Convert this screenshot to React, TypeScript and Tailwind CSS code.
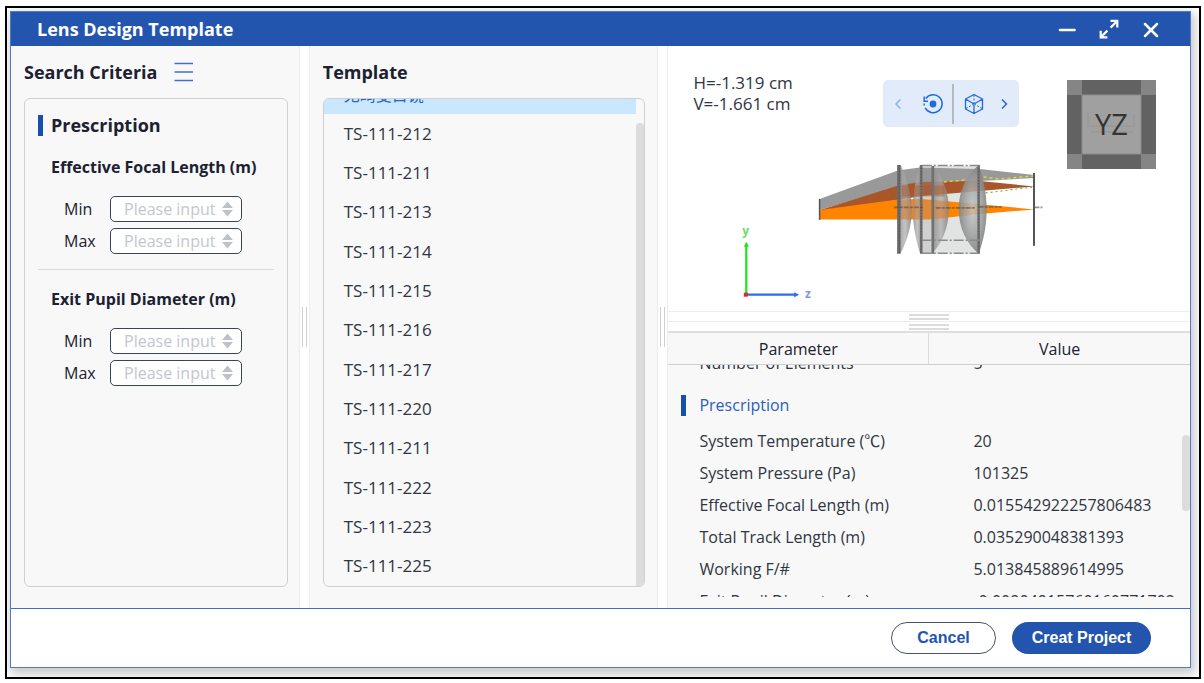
import { useLayoutEffect, useRef } from "react";

const templates = [
  "TS-111-212",
  "TS-111-211",
  "TS-111-213",
  "TS-111-214",
  "TS-111-215",
  "TS-111-216",
  "TS-111-217",
  "TS-111-220",
  "TS-111-211",
  "TS-111-222",
  "TS-111-223",
  "TS-111-225",
];

const prescription = [
  ["System Temperature (℃)", "20"],
  ["System Pressure (Pa)", "101325"],
  ["Effective Focal Length (m)", "0.015542922257806483"],
  ["Total Track Length (m)", "0.035290048381393"],
  ["Working F/#", "5.013845889614995"],
  ["Exit Pupil Diameter (m)", "-0.00904915760160771702"],
];

function TitleBar() {
  return (
    <header className="flex h-[34px] shrink-0 items-center justify-between bg-[#2355ae] pr-[29px] pl-[26px] text-white">
      <h1 className="text-lg leading-6 font-bold">Lens Design Template</h1>
      <div className="flex items-center gap-[22px]">
        <button type="button" aria-label="Minimize" className="size-5">
          <svg viewBox="0 0 20 20" className="size-5" fill="none" stroke="currentColor" strokeWidth="2.6" strokeLinecap="round">
            <path d="M3 11H17.500" />
          </svg>
        </button>
        <button type="button" aria-label="Maximize" className="size-5">
          <svg viewBox="0 0 20 20" className="size-5" fill="none" stroke="currentColor" strokeWidth="2.2">
            <path d="M11.500 1.900H18.300V8.500M18 2.200L11.600 8.600M8.400 18.300H1.700V11.700M2 18L8.400 11.600" />
          </svg>
        </button>
        <button type="button" aria-label="Close" className="size-5">
          <svg viewBox="0 0 20 20" className="size-5" fill="none" stroke="currentColor" strokeWidth="2.5" strokeLinecap="round">
            <path d="M4 5L16 17M16 5L4 17" />
          </svg>
        </button>
      </div>
    </header>
  );
}

function NumberField({ id, label }: { id: string; label: string }) {
  return (
    <div className="flex items-center">
      <label htmlFor={id} className="w-[46px] shrink-0 text-base leading-6">
        {label}
      </label>
      <div className="flex h-[26px] w-[132px] items-center rounded-[5px] border border-[#3a4456] bg-white pr-2 pl-[13px]">
        <input
          id={id}
          type="text"
          inputMode="decimal"
          placeholder="Please input"
          className="w-full min-w-0 flex-1 bg-transparent text-base leading-6 outline-none placeholder:text-[#c2c6d0]"
        />
        <svg viewBox="0 0 11 16" className="h-4 w-[11px] shrink-0 text-[#bcc1cc]" fill="currentColor">
          <path d="M5.500 0.500L11 7H0ZM0 9H11L5.500 15.500Z" />
        </svg>
      </div>
    </div>
  );
}

function RangeGroup({ id, title }: { id: string; title: string }) {
  return (
    <fieldset className="pl-[13px]">
      <legend className="text-base leading-6 font-bold">{title}</legend>
      <div className="flex flex-col gap-[6px] pt-[17px] pl-[13px]">
        <NumberField id={`${id}-min`} label="Min" />
        <NumberField id={`${id}-max`} label="Max" />
      </div>
    </fieldset>
  );
}

function SearchPanel() {
  return (
    <section className="flex min-w-0 flex-col border-r border-[#ececec] bg-[#f8f8f8] pt-[14px] pr-[11px] pb-[21px] pl-[13px]">
      <div className="flex h-[24px] items-center gap-4">
        <h2 className="text-lg leading-6 font-bold">Search Criteria</h2>
        <button type="button" aria-label="Criteria menu">
          <svg viewBox="0 0 20 20" className="size-5" fill="none" stroke="#3f6fc9" strokeWidth="1.6">
            <path d="M1.500 1.500H20M1.500 10H20M1.500 18.500H20" />
          </svg>
        </button>
      </div>
      <div className="mt-[14px] flex-1 rounded-md border border-[#d0d0d0] px-[13px] pt-[14px]">
        <div className="flex items-center gap-2">
          <span className="h-[21px] w-[5px] bg-[#1450ac]" />
          <h3 className="text-lg leading-6 font-bold">Prescription</h3>
        </div>
        <div className="flex flex-col gap-[15px] pt-[18px]">
          <RangeGroup id="focal" title="Effective Focal Length (m)" />
          <hr className="mb-[2px] border-[#d9d9d9]" />
          <RangeGroup id="pupil" title="Exit Pupil Diameter (m)" />
        </div>
      </div>
    </section>
  );
}

function TemplatePanel() {
  return (
    <section className="flex min-w-0 flex-col border-x border-[#ececec] bg-[#f8f8f8] pt-[14px] pr-3 pb-[21px] pl-[13px]">
      <h2 className="text-lg leading-6 font-bold">Template</h2>
      <div className="mt-[14px] flex min-h-0 flex-1 overflow-hidden rounded-md border border-[#cfcfcf]">
        <ul className="flex min-w-0 flex-1 flex-col text-[17px] leading-6 text-[#2f3542]">
          <li className="-mt-[24px] flex h-[39px] shrink-0 bg-[#c9e7ff] text-base text-[#2b62c0]">
            <button type="button" className="w-full px-5 text-left">无畸变目镜</button>
          </li>
          {templates.map((name, i) => (
            <li key={i} className="flex min-h-0 flex-1">
              <button type="button" className="w-full px-5 text-left">{name}</button>
            </li>
          ))}
        </ul>
        <div className="w-2 shrink-0 pt-6">
          <div className="h-full rounded-t-md bg-[#dcdcdc]" />
        </div>
      </div>
    </section>
  );
}

function Splitter() {
  return (
    <div className="flex items-center justify-center bg-white" role="separator" aria-orientation="vertical">
      <div className="flex h-10 w-[5px] justify-between border-x border-[#cfcfcf]" />
    </div>
  );
}

function LensScene() {
  return (
    <svg viewBox="667.500 46 523 265" className="absolute inset-0 size-full" aria-label="Lens layout">
      <defs>
        <linearGradient id="glass" x1="0" x2="1" y1="0" y2="0">
          <stop offset="0" stopColor="#8a8a8a" stopOpacity=".85" />
          <stop offset=".5" stopColor="#aaa" stopOpacity=".7" />
          <stop offset="1" stopColor="#7c7c7c" stopOpacity=".85" />
        </linearGradient>
        <radialGradient id="bulge">
          <stop offset="0" stopColor="#c6c6c6" stopOpacity=".8" />
          <stop offset="1" stopColor="#838585" stopOpacity=".9" />
        </radialGradient>
      </defs>

      <rect x="922" y="166" width="57" height="88" fill="#e2e4e3" />
      <path d="M819.500 199L898 170.500L920 167.500L980 169L1035 175V178L980 181L900 186L819.500 210Z" fill="#999" />
      <path d="M820 210L900 185L922 182L980 181L1035 186.500L980 191L922 196L898 200L820 211Z" fill="#a9562a" />
      <path d="M819.500 210L898 199.500L922 199L950 201.500L1035 209.500L980 214L930 219.500H819.500Z" fill="#ff8400" />
      <path d="M819.500 199V220" stroke="#555" strokeWidth="1.500" />

      <path d="M899 165H901C907 180 912 195 912 209C912 226 907 241 901 253H898Z" fill="url(#glass)" />
      <path d="M922 165H920C916 178 913 193 913 209C913 225 916 240 920 253H922Z" fill="url(#glass)" />
      <path d="M933 166C943 178 949 192 949 209C949 227 943 242 933 253Z" fill="url(#glass)" />
      <path d="M979 165C984 179 987 194 987 209C987 226 984 240 979 254C967 244 959 228 959 209C959 191 967 175 979 165Z" fill="url(#bulge)" />
      <path d="M922 169L933 167V253H922Z" fill="#999" opacity=".25" />
      <path d="M902 210H948" stroke="#e08a4a" strokeWidth="18" opacity=".4" />
      <path d="M902 191H945" stroke="#a9562a" strokeWidth="11" opacity=".4" />

      <path d="M899 165V254" stroke="#6a6a6a" strokeWidth="3.500" />
      <path d="M921.500 165V254M933 166V254M979 165V254" stroke="#707070" strokeWidth="2.600" />
      <path d="M899.500 165V254M921.500 165V254M979 165V254" stroke="#444" strokeWidth="1" strokeDasharray="1 2" opacity=".7" />
      <path d="M922 165.500H980M922 253.500H980M922 240.500H980" stroke="#8a8a8a" strokeWidth="1.500" strokeDasharray="10 2 2 2" />
      <path d="M894 207.500H924M936 208H975M979 207H1002M1035 207.500H1043" stroke="#4f4f4f" strokeWidth="1.800" strokeDasharray="5 1 3 1" opacity=".6" />
      <path d="M944 182L965 180M984 177L1000 179L1034 176" stroke="#e4d93b" strokeWidth="1.300" strokeDasharray="3 3" fill="none" />
      <path d="M986 193L1034 187" stroke="#80a84c" strokeWidth="1.200" strokeDasharray="2 3" />
      <path d="M1034.500 173V246" stroke="#555" strokeWidth="2" />

      <path d="M746 295V244" stroke="#1ae51a" strokeWidth="2.200" />
      <path d="M743.500 247L746 242L748.500 247Z" fill="#1ae51a" />
      <path d="M746 295H796" stroke="#2a6bff" strokeWidth="2.200" />
      <path d="M794 292.500L799 295L794 297.500Z" fill="#2a6bff" />
      <rect x="743.500" y="293" width="4" height="4" fill="#dc2929" />
      <text x="742" y="235" fontSize="12" fontWeight="700" fill="#6bdc6b" fontFamily="Open Sans, sans-serif">y</text>
      <text x="805" y="298" fontSize="12" fontWeight="700" fill="#8398d8" fontFamily="Open Sans, sans-serif">z</text>
    </svg>
  );
}

function ViewCube() {
  return (
    <svg viewBox="0 0 89 89" className="size-[89px]" aria-label="View cube">
      <rect width="89" height="89" fill="#858585" />
      <path d="M15 0H74V15H15ZM15 74H74V89H15ZM0 15H15V74H0ZM74 15H89V74H74Z" fill="#626262" />
      <rect x="15" y="15" width="59" height="59" fill="#a0a0a0" stroke="#8b8b8b" />
      <path d="M21 32V46H67V34M23 52H66" fill="none" stroke="#989898" strokeWidth="1.500" />
      <text x="44.500" y="55" textAnchor="middle" fontSize="29" fill="#343434" fontFamily="Open Sans, sans-serif">YZ</text>
    </svg>
  );
}

function ViewToolbar() {
  return (
    <div className="flex h-[47px] w-[136px] shrink-0 items-center rounded-[5px] bg-[#e2ebfa] text-[#1f6bdc]">
      <button type="button" aria-label="Previous view" className="flex w-[30px] justify-center text-[#84b5f2]">
        <svg viewBox="0 0 10 14" className="h-[14px] w-[10px]" fill="none" stroke="currentColor" strokeWidth="1.500">
          <path d="M7.500 2.500L3 7L7.500 11.500" />
        </svg>
      </button>
      <button type="button" aria-label="Reset rotation" className="flex w-[39px] justify-center">
        <svg viewBox="0 0 22 22" className="size-[22px]" fill="none" stroke="currentColor" strokeWidth="1.500">
          <path d="M3.800 5.500A9 9 0 1 1 3.200 14.800M2.200 3.500V8.200H6M2.200 10.500V12.500" />
          <circle cx="11" cy="11" r="3.400" fill="currentColor" stroke="none" />
        </svg>
      </button>
      <span className="h-10 w-[2px] bg-[#b4b9bd]" />
      <button type="button" aria-label="Cube view" className="flex w-[39px] justify-center">
        <svg viewBox="0 0 22 22" className="size-[22px]" fill="none" stroke="currentColor" strokeWidth="1.300" strokeLinejoin="round">
          <path d="M11 1.500L19.500 6V16L11 20.500L2.500 16V6ZM2.500 6L11 11L19.500 6M11 11V20.500" />
          <path d="M11 2V10M3 15.500L10 11.500M19 15.500L12 11.500" strokeWidth="1" strokeDasharray="2 1.500" />
        </svg>
      </button>
      <button type="button" aria-label="Next view" className="flex w-[22px] justify-center text-[#2e67c4]">
        <svg viewBox="0 0 10 14" className="h-[14px] w-[10px]" fill="none" stroke="currentColor" strokeWidth="1.500">
          <path d="M3 2.500L7.500 7L3 11.500" />
        </svg>
      </button>
    </div>
  );
}

function ParameterTable() {
  const body = useRef<HTMLTableSectionElement>(null);
  useLayoutEffect(() => {
    if (body.current) body.current.scrollTop = 19;
  }, []);

  return (
    <div className="relative flex min-h-0 flex-1 flex-col border-t-2 border-[#dfdfdf] bg-[#f8f8f8] pb-[11px]">
      <table className="flex min-h-0 flex-1 flex-col text-base leading-6">
        <thead className="block shrink-0 border-b border-[#cfcfcf]">
          <tr className="flex h-[31px]">
            <th scope="col" className="flex w-1/2 items-center justify-center border-r border-[#dcdcdc] font-normal">Parameter</th>
            <th scope="col" className="flex w-1/2 items-center justify-center font-normal">Value</th>
          </tr>
        </thead>
        <tbody ref={body} className="block min-h-0 flex-1 overflow-y-auto text-[#2f3542] [scrollbar-width:none]">
          <tr className="flex h-[33px] items-center">
            <td className="w-[305px] shrink-0 pl-[31px]">Number of Elements</td>
            <td>5</td>
          </tr>
          <tr className="flex h-[46px] items-center">
            <th scope="rowgroup" colSpan={2} className="flex items-center gap-[13px] pt-[6px] pl-[13px] font-normal text-[#2b5fb8]">
              <span className="h-[21px] w-[5px] bg-[#1450ac]" />
              Prescription
            </th>
          </tr>
          {prescription.map(([name, value]) => (
            <tr key={name} className="flex h-8 items-center">
              <td className="w-[305px] shrink-0 pl-[31px]">{name}</td>
              <td>{value}</td>
            </tr>
          ))}
        </tbody>
      </table>
      <div className="absolute top-[102px] right-0 h-[76px] w-2 rounded bg-[#dcdcdc]" />
    </div>
  );
}

function PreviewPanel() {
  return (
    <section className="flex min-w-0 flex-col border-l border-[#ececec]">
      <div className="relative h-[265px] shrink-0 bg-white">
        <LensScene />
        <div className="relative flex items-start pt-[34px] pr-[34px] pl-[25px]">
          <p className="-mt-2 flex-1 text-[17px] leading-[21px] text-[#2f3542]">
            H=-1.319 cm
            <br />
            V=-1.661 cm
          </p>
          <ViewToolbar />
          <div className="pl-12">
            <ViewCube />
          </div>
        </div>
      </div>
      <div role="separator" className="relative h-5 shrink-0 border-t border-[#ececec]">
        <div className="h-[10px] border-b border-[#ececec]" />
        <div className="absolute inset-0 flex flex-col items-center justify-center gap-1">
          <span className="h-[6px] w-10 border-y-2 border-[#dcdcdc]" />
          <span className="h-[6px] w-10 border-y-2 border-[#dcdcdc]" />
        </div>
      </div>
      <ParameterTable />
    </section>
  );
}

export default function App() {
  return (
    <div className="h-screen bg-white pt-[6px] pr-[3px] pb-1 pl-[5px] font-['Open_Sans','Noto_Sans_CJK_SC',sans-serif] text-[#1b2130]">
      <div className="flex h-full overflow-hidden border-2 border-black bg-white pt-[3px] pr-2 pb-[9px] pl-[3px]">
        <main className="flex min-w-0 flex-1 flex-col border border-[#4f7bcb] bg-white shadow-[2px_4px_10px_2px_rgba(0,0,0,0.22)]">
          <TitleBar />
          <div className="grid min-h-0 flex-1 grid-cols-[minmax(0,289fr)_9px_minmax(0,350fr)_9px_minmax(0,523fr)] grid-rows-[minmax(0,1fr)]">
            <SearchPanel />
            <Splitter />
            <TemplatePanel />
            <Splitter />
            <PreviewPanel />
          </div>
          <footer className="flex h-[59px] shrink-0 items-center justify-end gap-4 border-t border-[#3f70c9] pr-[39px] font-['Liberation_Sans',Arial,sans-serif] text-base font-bold">
            <button type="button" className="h-8 w-[105px] rounded-full border border-[#4a5363] text-[#2355ae]">
              Cancel
            </button>
            <button type="button" className="h-8 w-[139px] rounded-full bg-[#2355ae] text-white">
              Creat Project
            </button>
          </footer>
        </main>
      </div>
    </div>
  );
}
